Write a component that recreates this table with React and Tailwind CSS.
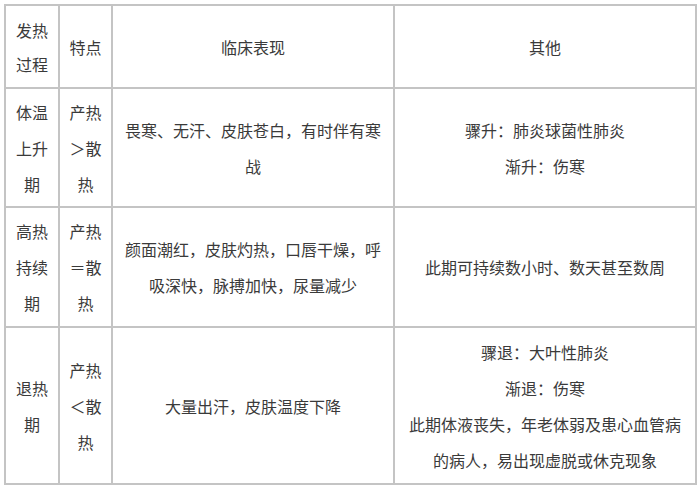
const rows = [
  {
    h: 'h-[119px]',
    stage: ['体温', '上升', '期'],
    trait: ['产热', '＞散', '热'],
    clinic: '畏寒、无汗、皮肤苍白，有时伴有寒战',
    other: ['骤升：肺炎球菌性肺炎', '渐升：伤寒'],
  },
  {
    h: 'h-[120px]',
    stage: ['高热', '持续', '期'],
    trait: ['产热', '＝散', '热'],
    clinic: '颜面潮红，皮肤灼热，口唇干燥，呼吸深快，脉搏加快，尿量减少',
    other: ['此期可持续数小时、数天甚至数周'],
  },
  {
    h: 'h-[157px]',
    stage: ['退热', '期'],
    trait: ['产热', '＜散', '热'],
    clinic: '大量出汗，皮肤温度下降',
    other: ['骤退：大叶性肺炎', '渐退：伤寒', '此期体液丧失，年老体弱及患心血管病的病人，易出现虚脱或休克现象'],
  },
]

const cell = 'border-2 border-[#c4c4c4] px-2 py-0 text-center align-middle'

function Lines({ items }) {
  return items.map((t, i) => (
    <span key={i} className="block">{t}</span>
  ))
}

export default function App() {
  return (
    <div className="min-h-[491px] w-[700px] bg-white pt-[4px] pl-[4px] font-['Noto_Sans_CJK_SC',sans-serif] text-[16px] leading-[36px] text-[#3a3a3a]">
      <table className="table-fixed w-[691px] border-collapse">
        <colgroup>
          <col className="w-[54px]" />
          <col className="w-[53px]" />
          <col className="w-[282px]" />
          <col className="w-[302px]" />
        </colgroup>
        <thead>
          <tr className="h-[83px]">
            <th className={`${cell} font-normal leading-[34px]`}>
              <Lines items={['发热', '过程']} />
            </th>
            <th className={`${cell} font-normal`}>特点</th>
            <th className={`${cell} font-normal`}>临床表现</th>
            <th className={`${cell} font-normal`}>其他</th>
          </tr>
        </thead>
        <tbody>
          {rows.map((r, i) => (
            <tr key={i} className={r.h}>
              <td className={cell}><Lines items={r.stage} /></td>
              <td className={cell}><Lines items={r.trait} /></td>
              <td className={cell}>{r.clinic}</td>
              <td className={cell}><Lines items={r.other} /></td>
            </tr>
          ))}
        </tbody>
      </table>
    </div>
  )
}
